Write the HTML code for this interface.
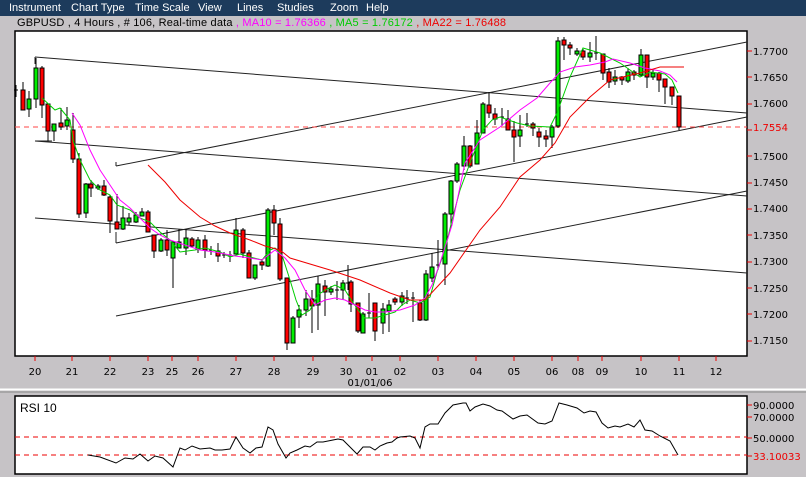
<!DOCTYPE html>
<html><head><meta charset="utf-8"><style>
html,body{margin:0;padding:0;}
body{width:806px;height:477px;background:#c6c3c6;position:relative;overflow:hidden;font-family:"Liberation Sans",sans-serif;}
#menu{position:absolute;left:0;top:0;width:806px;height:16px;background:#1d3b5c;color:#fff;font-size:11px;}
#menu span{position:absolute;top:2px;}
#hdr{position:absolute;left:17px;top:17px;font-size:11px;white-space:nowrap;color:#000;letter-spacing:0.18px;}
svg{position:absolute;left:0;top:0;}
</style></head><body>
<div id="menu"><span style="left:9px">Instrument</span><span style="left:71px">Chart Type</span><span style="left:135px">Time Scale</span><span style="left:198px">View</span><span style="left:237px">Lines</span><span style="left:277px">Studies</span><span style="left:330px">Zoom</span><span style="left:366px">Help</span></div>
<div id="hdr">GBPUSD , 4 Hours , # 106, Real-time data <span style="color:#f0f">, MA10 = 1.76366</span> <span style="color:#0c0">, MA5 = 1.76172</span> <span style="color:#e00">, MA22 = 1.76488</span></div>
<svg width="806" height="477" viewBox="0 0 806 477" font-family="Liberation Sans, sans-serif" font-size="10">
<rect x="15" y="31" width="732" height="325" fill="#fff" stroke="#000" stroke-width="1.5"/>
<line x1="0" y1="389.5" x2="806" y2="389.5" stroke="#fff" stroke-width="2"/>
<line x1="0" y1="392" x2="806" y2="392" stroke="#888" stroke-width="1"/>
<rect x="15" y="396" width="732" height="78" fill="#fff" stroke="#000" stroke-width="1.5"/>
<g stroke="#222" stroke-width="1" fill="none">
<path d="M35,57 L747,113"/><path d="M35,141 L747,196"/><path d="M35,218 L747,273"/>
<path d="M116,166 L747,42"/><path d="M116,243 L747,117"/><path d="M116,316 L747,191"/>
<path d="M35,57 V64 M35,141 H52 M116,166 V162 M116,243 V232"/>
</g>
<line x1="15" y1="127" x2="747" y2="127" stroke="#f44" stroke-dasharray="5,4"/>
<g stroke="#000" stroke-width="1">
<path d="M16,85V97M23,82V110M29,91V117M36,58V108M42,66V118M48,104V141M54,124V141M61,108V130M67,107V130M73,113V163M79,153V218M86,183V218M91,180V197M98,184V190M104,180V196M110,195V233M117,194V229M123,206V230M129,213V225M136,212V223M142,208V216M148,210V232M154,235V258M161,238V252M167,230V256M173,242V288M179,229V248M186,229V255M192,237V247M198,237V253M205,235V258M211,246V255M218,243V262M224,252V258M230,251V262M236,218V254M243,228V258M249,250V278M255,265V280M262,259V270M268,208V267M274,205V235M280,218V281M287,278V350M293,316V343M299,305V328M306,290V316M312,290V333M318,276V330M325,280V316M331,286V295M337,281V300M343,280V300M348,265V290M351,280V312M358,303V333M363,312V333M369,293V318M375,303V341M383,303V334M389,300V332M395,297V305M402,292V306M407,290V304M413,292V322M420,300V321M426,270V321M432,253V282M438,240V270M445,212V285M451,180V228M457,162V183M464,136V170M470,145V168M477,120V164M483,102V133M489,92V118M495,108V125M502,108V126M508,110V130M514,121V162M520,115V147M527,113V127M533,122V136M539,128V147M546,130V147M552,125V148M558,37V128M564,37V60M570,42V55M577,48V56M583,49V60M590,42V62M596,36V60M603,54V80M609,68V88M615,70V85M622,76V85M628,68V83M634,70V80M641,49V77M647,55V88M653,70V80M659,72V92M665,79V104M672,87V105M679,96V130"/>
<g fill="#f00">
<rect x="21" y="90" width="4" height="20"/><rect x="40" y="68" width="4" height="37"/><rect x="46" y="104" width="4" height="27"/><rect x="59" y="123" width="4" height="4"/><rect x="71" y="130" width="4" height="29"/><rect x="77" y="159" width="4" height="55"/><rect x="89" y="184" width="4" height="4"/><rect x="102" y="186" width="4" height="9"/><rect x="108" y="197" width="4" height="24"/><rect x="115" y="222" width="4" height="7"/><rect x="146" y="212" width="4" height="20"/><rect x="152" y="235" width="4" height="16"/><rect x="165" y="240" width="4" height="10"/><rect x="190" y="239" width="4" height="7"/><rect x="203" y="240" width="4" height="10"/><rect x="216" y="251" width="4" height="5"/><rect x="241" y="230" width="4" height="23"/><rect x="247" y="253" width="4" height="25"/><rect x="260" y="262" width="4" height="3"/><rect x="272" y="210" width="4" height="13"/><rect x="278" y="224" width="4" height="55"/><rect x="285" y="278" width="4" height="65"/><rect x="310" y="299" width="4" height="7"/><rect x="323" y="286" width="4" height="6"/><rect x="349" y="282" width="4" height="22"/><rect x="356" y="303" width="4" height="28"/><rect x="373" y="303" width="4" height="28"/><rect x="393" y="299" width="4" height="3"/><rect x="418" y="303" width="4" height="17"/><rect x="468" y="146" width="4" height="20"/><rect x="487" y="105" width="4" height="8"/><rect x="493" y="114" width="4" height="5"/><rect x="506" y="119" width="4" height="11"/><rect x="512" y="130" width="4" height="7"/><rect x="531" y="124" width="4" height="4"/><rect x="537" y="132" width="4" height="5"/><rect x="544" y="136" width="4" height="3"/><rect x="562" y="40" width="4" height="5"/><rect x="568" y="45" width="4" height="3"/><rect x="581" y="51" width="4" height="6"/><rect x="601" y="54" width="4" height="19"/><rect x="607" y="72" width="4" height="10"/><rect x="620" y="77" width="4" height="3"/><rect x="632" y="72" width="4" height="3"/><rect x="645" y="55" width="4" height="22"/><rect x="657" y="73" width="4" height="7"/><rect x="663" y="79" width="4" height="8"/><rect x="670" y="87" width="4" height="9"/><rect x="677" y="96" width="4" height="31"/>
</g>
<g fill="#0e0">
<rect x="27" y="99" width="4" height="10"/><rect x="34" y="68" width="4" height="31"/><rect x="52" y="124" width="4" height="7"/><rect x="65" y="120" width="4" height="6"/><rect x="84" y="184" width="4" height="29"/><rect x="96" y="186" width="4" height="2"/><rect x="121" y="218" width="4" height="11"/><rect x="127" y="218" width="4" height="4"/><rect x="134" y="215" width="4" height="7"/><rect x="140" y="212" width="4" height="4"/><rect x="159" y="240" width="4" height="11"/><rect x="171" y="242" width="4" height="16"/><rect x="177" y="242" width="4" height="6"/><rect x="184" y="238" width="4" height="10"/><rect x="196" y="240" width="4" height="9"/><rect x="234" y="230" width="4" height="24"/><rect x="253" y="265" width="4" height="13"/><rect x="266" y="210" width="4" height="56"/><rect x="291" y="318" width="4" height="25"/><rect x="297" y="310" width="4" height="7"/><rect x="304" y="299" width="4" height="11"/><rect x="316" y="284" width="4" height="21"/><rect x="329" y="289" width="4" height="3"/><rect x="341" y="283" width="4" height="7"/><rect x="361" y="314" width="4" height="19"/><rect x="381" y="309" width="4" height="14"/><rect x="387" y="305" width="4" height="6"/><rect x="400" y="296" width="4" height="6"/><rect x="424" y="274" width="4" height="46"/><rect x="430" y="267" width="4" height="11"/><rect x="443" y="214" width="4" height="50"/><rect x="449" y="181" width="4" height="33"/><rect x="455" y="164" width="4" height="17"/><rect x="462" y="146" width="4" height="20"/><rect x="475" y="133" width="4" height="31"/><rect x="481" y="104" width="4" height="29"/><rect x="518" y="130" width="4" height="6"/><rect x="550" y="127" width="4" height="10"/><rect x="556" y="41" width="4" height="85"/><rect x="575" y="51" width="4" height="3"/><rect x="588" y="53" width="4" height="4"/><rect x="613" y="77" width="4" height="4"/><rect x="626" y="72" width="4" height="9"/><rect x="639" y="55" width="4" height="20"/><rect x="651" y="73" width="4" height="4"/>
</g>
<path d="M14,90H18M209,250H213M222,255H226M228,255H232M335,290H339M346,283H350M367,313H371M405,298H409M411,298H415M436,265H440M500,117H504M525,124H529M594,53H598" stroke="#000"/>
</g>
<polyline fill="none" stroke="#0c0" stroke-width="1" points="42,98 55,110 60,108 70,120 73,140 80,160 90,180 100,190 110,195 117,205 130,210 140,218 150,222 160,232 170,240 180,252 195,250 205,248 220,252 230,257 240,254 250,257 262,260 270,250 275,248 282,255 290,280 296,300 302,315 310,310 318,295 325,290 335,285 345,290 350,298 358,310 365,318 375,318 385,315 395,312 402,305 410,300 420,303 430,297 437,272 445,250 452,220 460,190 470,163 483,130 492,120 500,117 517,123 530,126 550,127 557,113 570,77 583,48 600,53 620,63 640,77 650,72 665,74 672,80 678,93"/>
<polyline fill="none" stroke="#f0f" stroke-width="1" points="72,113 80,125 90,150 100,170 110,185 120,200 130,208 140,218 150,228 160,235 170,240 185,245 200,250 215,252 235,256 250,258 262,260 275,250 285,258 295,270 305,290 315,305 325,300 335,298 345,300 355,305 365,310 375,312 385,312 400,310 415,305 425,298 432,285 440,263 452,225 465,163 480,140 500,127 520,110 537,98 550,83 560,72 575,67 590,65 605,62 613,59 630,63 645,68 660,71 670,75 677,82"/>
<polyline fill="none" stroke="#e00" stroke-width="1" points="148,165 165,182 180,200 200,217 215,226 230,233 250,240 265,246 280,250 290,258 330,270 360,280 390,293 410,300 425,300 450,273 480,230 500,207 520,177 540,160 555,143 570,117 590,97 610,80 640,73 660,67 684,67"/>
<g stroke="#e00"><path d="M747,51H752M747,77H752M747,104H752M747,130H752M747,156H752M747,183H752M747,209H752M747,235H752M747,262H752M747,288H752M747,314H752M747,341H752"/></g>
<g fill="#000" font-family="DejaVu Sans, sans-serif" font-size="10">
<text x="753" y="55">1.7700</text><text x="753" y="81">1.7650</text><text x="753" y="107">1.7600</text><text x="753" y="160">1.7500</text><text x="753" y="186">1.7450</text><text x="753" y="212">1.7400</text><text x="753" y="239">1.7350</text><text x="753" y="265">1.7300</text><text x="753" y="292">1.7250</text><text x="753" y="318">1.7200</text><text x="753" y="344">1.7150</text>
<text x="753" y="131" fill="#e00">1.7554</text>
</g>
<g stroke="#e00"><path d="M35,356V361M72,356V361M110,356V361M148,356V361M172,356V361M198,356V361M236,356V361M274,356V361M313,356V361M346,356V361M372,356V361M400,356V361M438,356V361M476,356V361M514,356V361M552,356V361M578,356V361M602,356V361M641,356V361M679,356V361M716,356V361"/></g>
<g fill="#000" font-family="DejaVu Sans, sans-serif" font-size="10" text-anchor="middle">
<text x="35" y="375">20</text><text x="72" y="375">21</text><text x="110" y="375">22</text><text x="148" y="375">23</text><text x="172" y="375">25</text><text x="198" y="375">26</text><text x="236" y="375">27</text><text x="274" y="375">28</text><text x="313" y="375">29</text><text x="346" y="375">30</text><text x="372" y="375">01</text><text x="400" y="375">02</text><text x="438" y="375">03</text><text x="476" y="375">04</text><text x="514" y="375">05</text><text x="552" y="375">06</text><text x="578" y="375">08</text><text x="602" y="375">09</text><text x="641" y="375">10</text><text x="679" y="375">11</text><text x="716" y="375">12</text>
<text x="370" y="386">01/01/06</text>
</g>
<text x="20" y="412" font-size="12" fill="#000">RSI 10</text>
<g stroke="#e00" stroke-dasharray="5,4"><line x1="15" y1="437" x2="747" y2="437"/><line x1="15" y1="455" x2="747" y2="455"/></g>
<polyline fill="none" stroke="#000" stroke-width="1" points="88,455 100,457 116,463 125,458 133,459 140,454 148,461 155,456 163,458 173,467 180,448 185,450 192,446 200,449 210,448 215,450 222,450 230,449 236,437 243,448 250,453 256,448 262,447 268,427 273,430 278,444 286,458 290,453 297,450 305,446 310,447 317,442 323,442 333,440 338,439 343,440 348,445 357,454 363,447 370,447 375,450 380,446 387,443 392,442 397,438 400,437 410,436 415,438 420,448 425,427 430,424 438,424 445,413 453,405 463,403 466,403 470,411 475,407 483,404 490,406 497,410 502,411 513,419 520,416 527,415 538,423 545,424 552,421 559,403 567,405 577,408 584,413 590,411 596,412 602,423 608,428 615,426 620,427 628,424 634,427 640,420 645,430 652,431 660,436 670,441 678,455"/>
<g stroke="#e00"><path d="M747,405H752M747,417H752M747,438H752M747,456H752"/></g>
<g font-family="DejaVu Sans, sans-serif" font-size="10" fill="#000">
<text x="753" y="409">90.0000</text><text x="753" y="421">70.0000</text><text x="753" y="442">50.0000</text><text x="753" y="460" fill="#e00">33.10033</text>
</g>
</svg>
</body></html>
